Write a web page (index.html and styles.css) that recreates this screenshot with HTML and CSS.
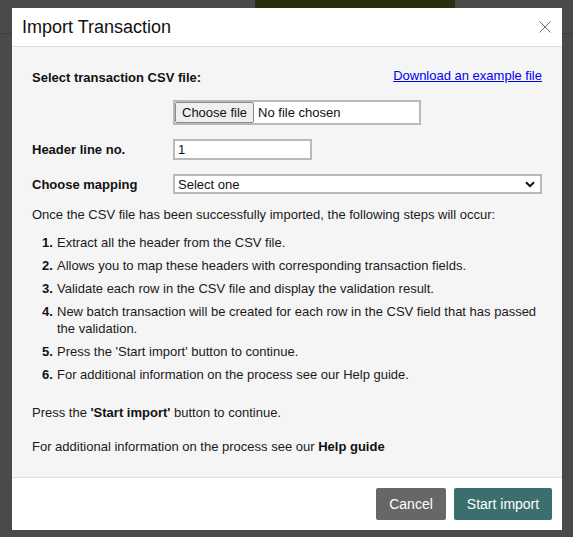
FILE: index.html
```html
<!DOCTYPE html>
<html lang="en">
<head>
<meta charset="utf-8">
<title>Import Transaction</title>
<link rel="stylesheet" href="styles.css">
</head>
<body>
<div class="backdrop">
  <div class="bg-block"></div>
  <div class="bg-line"></div>
</div>
<div class="modal">
  <div class="modal-header">
    <h1 class="modal-title">Import Transaction</h1>
    <button class="close" type="button" aria-label="Close">
      <svg width="12" height="12" viewBox="0 0 12 12"><path d="M0.5 0.5 L11.5 11.5 M11.5 0.5 L0.5 11.5" stroke="#666" stroke-width="1" fill="none"/></svg>
    </button>
  </div>
  <div class="modal-body">
    <div class="row row-top">
      <label class="label">Select transaction CSV file:</label>
      <a class="link" href="#">Download an example file</a>
    </div>
    <div class="row row-file">
      <div class="spacer"></div>
      <div class="file-input">
        <span class="file-btn">Choose file</span>
        <span class="file-text">No file chosen</span>
      </div>
    </div>
    <div class="row row-header">
      <label class="label">Header line no.</label>
      <input class="text-input" type="text" value="1">
    </div>
    <div class="row row-map">
      <label class="label">Choose mapping</label>
      <div class="select">
        <span>Select one</span>
        <svg class="chev" width="10" height="7" viewBox="0 0 10 7"><path d="M1 1.2 L5 5.2 L9 1.2" stroke="#111" stroke-width="2" fill="none"/></svg>
      </div>
    </div>
    <p class="intro">Once the CSV file has been successfully imported, the following steps will occur:</p>
    <ol class="steps">
      <li><span class="num">1.</span><span>Extract all the header from the CSV file.</span></li>
      <li><span class="num">2.</span><span>Allows you to map these headers with corresponding transaction fields.</span></li>
      <li><span class="num">3.</span><span>Validate each row in the CSV file and display the validation result.</span></li>
      <li><span class="num">4.</span><span>New batch transaction will be created for each row in the CSV field that has passed the validation.</span></li>
      <li><span class="num">5.</span><span>Press the 'Start import' button to continue.</span></li>
      <li><span class="num">6.</span><span>For additional information on the process see our Help guide.</span></li>
    </ol>
    <p class="note">Press the <b>'Start import'</b> button to continue.</p>
    <p class="note note-last">For additional information on the process see our <b>Help guide</b></p>
  </div>
  <div class="modal-footer">
    <button class="btn btn-cancel" type="button">Cancel</button>
    <button class="btn btn-primary" type="button">Start import</button>
  </div>
</div>
</body>
</html>
```

FILE: styles.css
```css
html, body {
  margin: 0;
  padding: 0;
}
body {
  background: #4a4a4a;
  font-family: "Liberation Sans", Arial, sans-serif;
  font-size: 13px;
  color: #1a1a1a;
  width: 573px;
  height: 537px;
  overflow: hidden;
  position: relative;
}
.backdrop {
  position: absolute;
  inset: 0;
}
.bg-block {
  position: absolute;
  left: 255px;
  top: 0;
  width: 200px;
  height: 8px;
  background: #26300f;
}
.bg-line {
  position: absolute;
  left: 0;
  right: 0;
  top: 33px;
  height: 1px;
  background: #3e3e3e;
}
.modal {
  position: relative;
  margin: 8px 11px 0 12px;
  width: 550px;
  height: 522px;
  background: #f5f5f5;
  display: flex;
  flex-direction: column;
}
.modal-header {
  background: #fff;
  padding: 8px 10px;
  display: flex;
  align-items: center;
  justify-content: space-between;
  border-bottom: 1px solid #dcdcdc;
}
.modal-title {
  margin: 0;
  font-size: 18px;
  font-weight: normal;
  line-height: 22px;
  color: #111;
}
.close {
  border: 0;
  background: none;
  padding: 0;
  width: 12px;
  height: 12px;
  display: flex;
  margin-right: 1px;
}
.modal-body {
  flex: 1;
  padding: 22px 20px 0 20px;
  line-height: 17px;
}
.row {
  display: flex;
  align-items: center;
}
.row-top {
  justify-content: space-between;
  align-items: flex-start;
}
.label {
  font-weight: bold;
  width: 141px;
  flex: none;
  color: #111;
}
.row-top .label {
  width: auto;
}
.link {
  color: #0000ee;
  margin-top: -2px;
}
.spacer {
  width: 141px;
  flex: none;
}
.row-file {
  margin-top: 14px;
}
.file-input {
  width: 248px;
  height: 25px;
  box-sizing: border-box;
  border: 2px solid #b9b9b9;
  background: #fff;
  display: flex;
  align-items: center;
  gap: 4px;
}
.file-btn {
  height: 21px;
  box-sizing: border-box;
  border: 1px solid #8a8a8a;
  border-radius: 2px;
  background: #efefef;
  padding: 0 6px;
  display: flex;
  align-items: center;
  color: #111;
}
.file-text {
  color: #111;
}
.row-header {
  margin-top: 14px;
}
.text-input {
  width: 139px;
  height: 21px;
  box-sizing: border-box;
  border: 2px solid #b9b9b9;
  background: #fff;
  padding: 0 3px;
  font-family: inherit;
  font-size: 13px;
  color: #111;
  margin: 0;
  outline: none;
}
.row-map {
  margin-top: 14px;
}
.select {
  flex: 1;
  height: 20px;
  box-sizing: border-box;
  border: 2px solid #b9b9b9;
  background: #fff;
  padding: 0 5px 0 3px;
  display: flex;
  align-items: center;
  justify-content: space-between;
  color: #111;
}
.intro {
  margin: 12px 0 11px;
}
.steps {
  list-style: none;
  margin: 0;
  padding: 0 0 0 10px;
}
.steps li {
  display: flex;
  margin-bottom: 6px;
}
.steps li:last-child {
  margin-bottom: 0;
}
.num {
  font-weight: bold;
  width: 15px;
  flex: none;
  color: #111;
}
.note {
  margin: 21px 0 0;
}
.note-last {
  margin-top: 17px;
}
.note b {
  color: #111;
}
.modal-footer {
  background: #fff;
  border-top: 1px solid #dcdcdc;
  padding: 10px 10px 10px;
  display: flex;
  justify-content: flex-end;
  gap: 8px;
}
.btn {
  height: 32px;
  border: 0;
  border-radius: 2px;
  color: #fff;
  font-family: "Liberation Sans", Arial, sans-serif;
  font-size: 14px;
  padding: 0;
}
.btn-cancel {
  width: 70px;
  background: #676767;
}
.btn-primary {
  width: 98px;
  background: #3a6f6d;
}
```
